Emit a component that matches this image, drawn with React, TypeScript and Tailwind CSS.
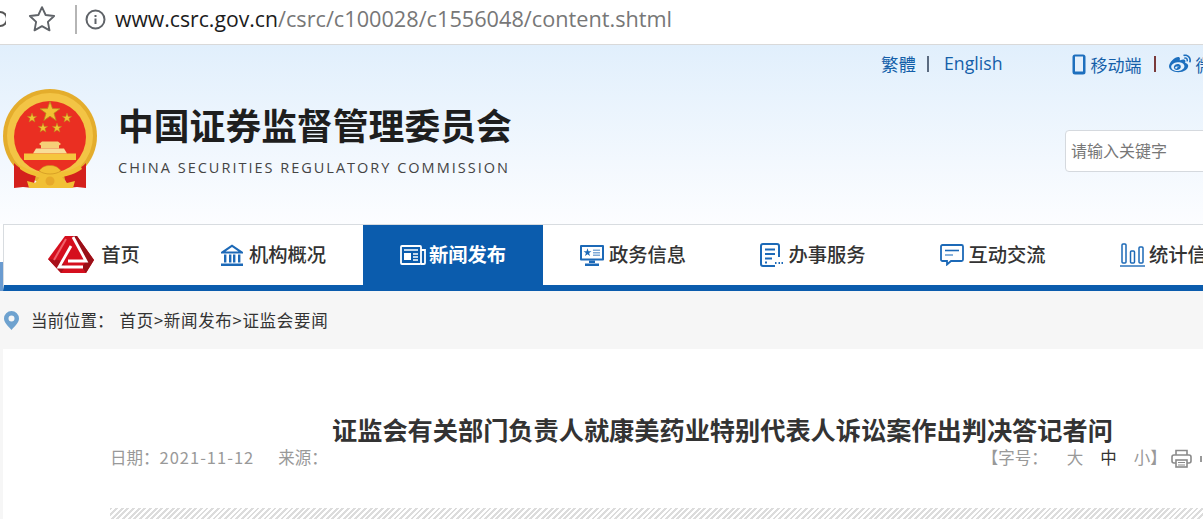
import { FaWeibo } from "react-icons/fa";
import type { ReactNode } from "react";

const cjk = "font-['Noto_Sans_CJK_SC','Noto_Sans',sans-serif]";

function starPoints(cx: number, cy: number, r: number) {
  const pts: string[] = [];
  for (let i = 0; i < 10; i++) {
    const rad = i % 2 === 0 ? r : r * 0.4;
    const a = (Math.PI / 5) * i - Math.PI / 2;
    pts.push(`${(cx + rad * Math.cos(a)).toFixed(2)},${(cy + rad * Math.sin(a)).toFixed(2)}`);
  }
  return pts.join(" ");
}

function Emblem() {
  return (
    <svg width="98" height="102" viewBox="0 0 98 102" className="shrink-0">
      <circle cx="50" cy="47" r="47" fill="#e4ad2c" />
      <circle cx="50" cy="47" r="43" fill="#f3c445" />
      <path d="M14 74c6 6 14 10 22 12l-3 13-10-1-9 1z" fill="#d4201c" />
      <path d="M86 74c-6 6-14 10-22 12l3 13 10-1 9 1z" fill="#d4201c" />
      <circle cx="50" cy="48" r="36" fill="#ea2f22" />
      <polygon points={starPoints(50, 23, 10.500)} fill="#f1c232" stroke="#b98a1c" strokeWidth="0.800" />
      <polygon points={starPoints(32, 29, 5)} fill="#f1c232" stroke="#b98a1c" strokeWidth="0.500" />
      <polygon points={starPoints(67, 29, 5)} fill="#f1c232" stroke="#b98a1c" strokeWidth="0.500" />
      <polygon points={starPoints(43, 39, 5)} fill="#f1c232" stroke="#b98a1c" strokeWidth="0.500" />
      <polygon points={starPoints(57, 39, 5)} fill="#f1c232" stroke="#b98a1c" strokeWidth="0.500" />
      <path d="M39 55l3-2.500h16l3 2.500-2 1.500v3H41v-3z" fill="#f6cf78" />
      <path d="M36 59.500h28l3 5H33z" fill="#f8dd98" />
      <rect x="24" y="64.500" width="52" height="6.500" fill="#f5c63f" />
      <path d="M20 76c9 6 19 8 30 8s21-2 30-8l2 4c-7 5-14 7-20 8l5 6 8-2-2 7H29l-2-7 8 2 5-6c-6-1-13-3-20-8z" fill="#f1c035" />
      <path d="M39 82c3-4 6-5.500 11-5.500s8 1.500 11 5.500c-3 2-7 3-11 3s-8-1-11-3z" fill="#f1c035" stroke="#c78d1d" strokeWidth="0.600" />
      <circle cx="50" cy="92" r="4.500" fill="#e7a92a" />
    </svg>
  );
}

function CsrcLogo() {
  return (
    <svg width="46" height="42" viewBox="0 0 46 42" className="shrink-0">
      <path d="M17 0h12l17 24-8 13H13L0 23z" fill="#d50f1e" transform="translate(0 2)" />
      <path d="M29 2l17 24-8 13-4-6 5-7-14-24z" fill="#9a1018" />
      <path d="M0 25l13 14 5-7-7-6z" fill="#a8101a" />
      <path d="M25 3l13 24H20" fill="none" stroke="#fff" strokeWidth="2.800" />
      <path d="M23 12L11 33h24" fill="none" stroke="#fff" strokeWidth="2.800" />
      <path d="M18 5L6 26" fill="none" stroke="#f0616a" strokeWidth="2" />
    </svg>
  );
}

function BankIcon() {
  return (
    <svg width="24" height="24" viewBox="0 0 24 24" fill="#1c69b7" className="shrink-0">
      <path d="M12 1.500L1 9v1.500h22V9zM12 4l6.500 4.600h-13z" fillRule="evenodd" />
      <rect x="4" y="11.500" width="2.400" height="8" />
      <rect x="9" y="11.500" width="2.400" height="8" />
      <rect x="13" y="11.500" width="2.400" height="8" />
      <rect x="18" y="11.500" width="2.400" height="8" />
      <rect x="1" y="20.500" width="22" height="2.500" />
    </svg>
  );
}

function NewsIcon() {
  return (
    <svg width="26" height="20" viewBox="0 0 26 20" fill="none" stroke="#fff" strokeWidth="1.800" className="shrink-0">
      <rect x="1" y="1" width="20" height="18" rx="1" />
      <path d="M21 5h4v13a1 1 0 01-1 1h-3" />
      <rect x="4" y="8" width="7" height="7" fill="#fff" stroke="none" />
      <path d="M4 5h14M13 9h5M13 12h5M13 15h5" strokeWidth="1.400" />
    </svg>
  );
}

function ScreenIcon() {
  return (
    <svg width="24" height="21" viewBox="0 0 24 21" className="shrink-0">
      <rect x="0" y="0" width="24" height="15.500" rx="1" fill="#1c69b7" />
      <rect x="2" y="2" width="20" height="11.500" fill="#fff" />
      <polygon points={starPoints(7.500, 7.500, 4.200)} fill="#1c69b7" />
      <path d="M13 4.500h7v1.500h-7zM13 7h7v1.500h-7zM13 9.500h7V11h-7z" fill="#7fa9d6" />
      <path d="M9 15.500h6V18H9zM5 18.500h14V21H5z" fill="#1c69b7" />
    </svg>
  );
}

function FormIcon() {
  return (
    <svg width="24" height="24" viewBox="0 0 24 24" fill="none" className="shrink-0">
      <path d="M19 14V3a2 2 0 00-2-2H3a2 2 0 00-2 2v18a2 2 0 002 2h12" stroke="#1c69b7" strokeWidth="2" />
      <path d="M5 6.500h10M5 11h10M5 15.500h7" stroke="#1c69b7" strokeWidth="1.800" />
      <path d="M5 19.500h2M15 20h1.500M18.500 20H20M21.500 20H23" stroke="#1c69b7" strokeWidth="2" />
    </svg>
  );
}

function ChatIcon() {
  return (
    <svg width="24" height="22" viewBox="0 0 24 22" fill="none" className="shrink-0">
      <path d="M2.500 1h19A1.500 1.500 0 0123 2.500v13a1.500 1.500 0 01-1.500 1.500H11l-4 3.500V17H2.500A1.500 1.500 0 011 15.500v-13A1.500 1.500 0 012.500 1z" stroke="#1c69b7" strokeWidth="1.800" />
      <path d="M5 6.500h14" stroke="#1c69b7" strokeWidth="1.600" />
      <path d="M5 11h8" stroke="#6b9fd4" strokeWidth="1.600" />
    </svg>
  );
}

function BarsIcon() {
  return (
    <svg width="25" height="24" viewBox="0 0 25 24" fill="none" stroke="#1c69b7" strokeWidth="1.500" className="shrink-0">
      <rect x="2" y="1" width="4" height="19" rx="1" />
      <rect x="10.500" y="8" width="4" height="12" rx="1" />
      <rect x="19" y="4" width="4" height="16" rx="1" />
      <path d="M0 23h25" strokeWidth="1.400" />
    </svg>
  );
}

const navItems: { label: string; icon: ReactNode; active?: boolean; gap: string }[] = [
  { label: "首页", icon: <CsrcLogo />, gap: "gap-[7px] pl-[2px]" },
  { label: "机构概况", icon: <BankIcon />, gap: "gap-[5px]" },
  { label: "新闻发布", icon: <NewsIcon />, active: true, gap: "gap-[3px]" },
  { label: "政务信息", icon: <ScreenIcon />, gap: "gap-[5px]" },
  { label: "办事服务", icon: <FormIcon />, gap: "gap-[4px]" },
  { label: "互动交流", icon: <ChatIcon />, gap: "gap-[4px]" },
  { label: "统计信息", icon: <BarsIcon />, gap: "gap-[4px]" },
];

function BrowserBar() {
  return (
    <div className="flex h-[45px] items-center border-b border-[#d9d9d9] bg-white pb-[6px]">
      <svg width="6" height="24" viewBox="0 0 6 24" fill="none" stroke="#555" strokeWidth="2" className="shrink-0">
        <path d="M0 5a7 7 0 010 14" />
      </svg>
      <svg width="30" height="30" viewBox="0 0 24 24" fill="none" stroke="#5f6368" strokeWidth="1.500" strokeLinejoin="round" className="ml-[21px] shrink-0">
        <path d="M12 2.500l2.900 6.300 6.800.8-5 4.700 1.300 6.800-6-3.400-6 3.400 1.300-6.800-5-4.700 6.800-.8z" />
      </svg>
      <div className="ml-[18px] h-[29px] w-[2px] shrink-0 bg-[#b5b5b5]" />
      <svg width="21" height="21" viewBox="0 0 21 21" fill="none" stroke="#5f6368" className="ml-[8px] shrink-0">
        <circle cx="10.500" cy="10.500" r="9" strokeWidth="2" />
        <path d="M10.500 9.500v5.500" strokeWidth="2" />
        <path d="M10.500 6v2" strokeWidth="2" />
      </svg>
      <div className="ml-[9px] whitespace-nowrap font-['Open_Sans',sans-serif] text-[21.700px] leading-none text-[#777]">
        <span className="text-[21.200px] text-[#1c1c1c]">www.csrc.gov.cn</span>/csrc/c100028/c1556048/content.shtml
      </div>
    </div>
  );
}

function Header() {
  return (
    <header className="h-[179px] bg-gradient-to-b from-[#e1effc] to-[#fcfdff]">
      <div className={`flex h-[44px] items-center whitespace-nowrap pb-[6px] text-[17px] leading-none text-[#145fa9] ${cjk}`}>
        <span className="ml-[881px] shrink-0 text-[17.500px]">繁體</span>
        <span className="ml-[11px] h-[16px] w-[2px] shrink-0 bg-[#5b6b80]" />
        <span className="ml-[15px] shrink-0 font-['Open_Sans',sans-serif] text-[17.700px]">English</span>
        <svg width="14" height="21" viewBox="0 0 14 21" className="ml-[69px] shrink-0">
          <rect x="0.500" y="0.500" width="13" height="20" rx="2.500" fill="#1d6fbe" />
          <rect x="3" y="2.500" width="8" height="15" fill="#e4f0fc" />
        </svg>
        <span className="ml-[5px] shrink-0">移动端</span>
        <span className="ml-[12px] h-[16px] w-[2px] shrink-0 bg-[#7a3a3a]" />
        <FaWeibo className="ml-[13px] shrink-0 text-[22px] text-[#1d6fbe]" />
        <span className="ml-[5px] shrink-0">微博</span>
      </div>
      <div className="flex">
        <Emblem />
        <div className={`ml-[20px] mt-[12px] w-[396px] shrink-0 ${cjk}`}>
          <div className="whitespace-nowrap text-[35.800px] font-bold leading-[46px] text-[#1e1e1e]">中国证券监督管理委员会</div>
          <div className="mt-[11px] whitespace-nowrap font-['Open_Sans',sans-serif] text-[14.500px] leading-[20px] tracking-[2px] text-[#444]">
            CHINA SECURITIES REGULATORY COMMISSION
          </div>
        </div>
        <div className={`ml-[551px] mt-[41px] flex h-[42px] w-[160px] shrink-0 items-center rounded-[4px] border border-[#d5d9de] bg-white pb-[3px] pl-[5px] text-[16px] text-[#777] ${cjk}`}>
          请输入关键字
        </div>
      </div>
    </header>
  );
}

function Nav() {
  return (
    <nav className="flex h-[67px]">
      <div className="flex w-[3px] shrink-0 flex-col justify-end">
        <div className="h-[29px] bg-[#6a9bd0]" />
      </div>
      <div className="w-[1200px] overflow-hidden border-b-[6px] border-l border-t border-[#0b5cad] border-l-[#d8dce0] border-t-[#d8dce0] bg-white">
        <div className={`-ml-px grid h-full w-[1260px] grid-cols-[repeat(7,180px)] text-[19.300px] leading-none ${cjk}`}>
          {navItems.map((item) => (
            <div
              key={item.label}
              className={`flex items-center justify-center ${item.gap} ${item.active ? "-mt-px -mb-px bg-[#0b5cad] font-bold text-white" : "font-medium text-[#333]"}`}
            >
              {item.icon}
              <span className="whitespace-nowrap">{item.label}</span>
            </div>
          ))}
        </div>
      </div>
    </nav>
  );
}

function Breadcrumb() {
  return (
    <div className={`flex h-[58px] items-center bg-[#f6f6f6] pl-[4px] text-[16.500px] text-[#333] ${cjk}`}>
      <svg width="15" height="19" viewBox="0 0 15 19" className="shrink-0">
        <path fillRule="evenodd" d="M7.500 0A7.500 7.500 0 0115 7.500C15 12 10 16 7.500 19 5 16 0 12 0 7.500A7.500 7.500 0 017.500 0zm0 4.500a3 3 0 100 6 3 3 0 000-6z" fill="#6ea2cf" />
      </svg>
      <span className="ml-[12px] shrink-0">{"当前位置\uFF1A"}</span>
      <span className="ml-[6px] whitespace-nowrap tracking-[0.700px]">首页&gt;新闻发布&gt;证监会要闻</span>
    </div>
  );
}

function Article() {
  return (
    <div className="h-[170px] overflow-hidden bg-[#f6f6f6] pl-[3px]">
      <div className={`h-full bg-white pl-[107px] ${cjk}`}>
        <h1 className="whitespace-nowrap pl-[222px] pt-[64px] text-[25.200px] font-bold leading-[32px] text-[#333]">
          证监会有关部门负责人就康美药业特别代表人诉讼案作出判决答记者问
        </h1>
        <div className="flex h-[24px] items-center whitespace-nowrap text-[16.500px] leading-none text-[#999]">
          <span className="shrink-0">{"日期\uFF1A"}<span className="tracking-[1px]">2021-11-12</span></span>
          <span className="ml-[24px] shrink-0">{"来源\uFF1A"}</span>
          <span className="ml-[654px] shrink-0">{"【字号\uFF1A"}</span>
          <span className="ml-[19px] shrink-0">大</span>
          <span className="ml-[17px] shrink-0 text-[#333]">中</span>
          <span className="ml-[17px] shrink-0">小】</span>
          <svg width="21" height="19" viewBox="0 0 21 19" fill="none" stroke="#8a8a8a" strokeWidth="1.600" className="ml-[4px] mt-[3px] shrink-0">
            <path d="M5 6V1.500h11V6" />
            <rect x="1" y="6" width="19" height="8" rx="2" />
            <rect x="5" y="11" width="11" height="7" fill="#fff" />
            <path d="M7 13.500h7M7 16h7" strokeWidth="1" />
          </svg>
          <span className="ml-[8px] mt-[3px] h-[6px] w-[2px] shrink-0 bg-[#999]" />
        </div>
        <div className="mt-[39px] h-[11px] bg-[repeating-linear-gradient(135deg,#dcdcdc_0,#dcdcdc_2px,#ffffff_2px,#ffffff_4px)]" />
      </div>
    </div>
  );
}

export default function App() {
  return (
    <div className="h-[519px] w-[1203px] overflow-hidden bg-white">
      <BrowserBar />
      <Header />
      <Nav />
      <Breadcrumb />
      <Article />
    </div>
  );
}
